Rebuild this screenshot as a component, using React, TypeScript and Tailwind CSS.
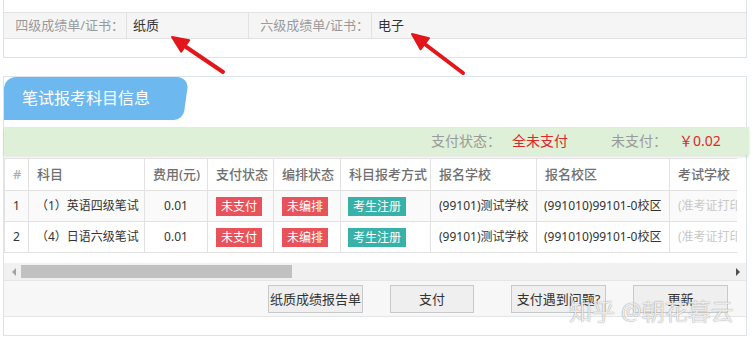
import React from "react"

const font = "font-['Noto_Sans','Noto_Sans_CJK_SC',sans-serif]"

const cols = [24, 116, 63, 66, 67, 90, 106, 133, 120]

const headers = ["#", "科目", "费用(元)", "支付状态", "编排状态", "科目报考方式", "报名学校", "报名校区", "考试学校"]

const rows = [
  { no: "1", name: "（1）英语四级笔试" },
  { no: "2", name: "（4）日语六级笔试" },
]

function Badge({ children, tone }: { children: React.ReactNode; tone: "red" | "teal" }) {
  return (
    <span
      className={
        "inline-block h-[19px] px-[5px] text-[12px] leading-[19px] text-white " +
        (tone === "red" ? "bg-[#e8525a]" : "bg-[#38b1a9]")
      }
    >
      {children}
    </span>
  )
}

function Btn({ children, w }: { children: React.ReactNode; w: string }) {
  return (
    <button
      className={`${w} h-[28px] border border-[#c9c9c9] bg-[#efefef] text-[13px] leading-[26px] text-[#333] whitespace-nowrap`}
    >
      {children}
    </button>
  )
}

export default function App() {
  return (
    <div className={`relative w-[753px] h-[344px] overflow-hidden bg-white ${font}`}>
      {/* Certificate panel */}
      <div className="ml-[3px] w-[744px] h-[58px] border-x border-b border-[#dbe4ea] pt-[12px]">
        <div className="flex h-[27px] border-y border-[#e2e2e2] bg-[#f5f5f5] text-[13px] leading-[25px]">
          <div className="w-[123px] border-r border-[#e2e2e2] pr-[2px] text-right text-[#9a9a9a]">四级成绩单/证书：</div>
          <div className="w-[122px] border-r border-[#e2e2e2] pl-[6px] text-[#333]">纸质</div>
          <div className="w-[123px] border-r border-[#e2e2e2] pr-[2px] text-right text-[#9a9a9a]">六级成绩单/证书：</div>
          <div className="flex-1 pl-[6px] text-[#333]">电子</div>
        </div>
      </div>

      {/* Exam subjects panel */}
      <div className="mt-[18px] ml-[3px] w-[744px] h-[260px] border border-[#dbe4ea]">
        {/* Tab */}
        <div className="flex h-[43px]">
          <div className="w-[170px] rounded-tl-[12px] bg-[#6db9ef] pl-[18px] text-[16px] leading-[43px] text-white">
            笔试报考科目信息
          </div>
          <div className="-ml-[12px] w-[24px] -skew-x-[8deg] rounded-tr-[12px] rounded-br-[9px] bg-[#6db9ef]" />
        </div>

        {/* Payment summary */}
        <div className="mt-[7px] -mr-[3px] flex h-[28px] items-center bg-[#dff0d8] pl-[427px] text-[14px] leading-[28px] shadow-[0_2px_3px_rgba(0,0,0,0.12)]">
          <span className="text-[#9a9a9a]">支付状态：</span>
          <span className="ml-[11px] text-[#e0262b]">全未支付</span>
          <span className="ml-[43px] text-[#9a9a9a]">未支付：</span>
          <span className="ml-[12px] text-[#e0262b]">￥0.02</span>
        </div>

        {/* Table */}
        <div className="mt-[3px] w-[733px] overflow-hidden">
          <table className="table-fixed border-collapse w-[785px]">
            <colgroup>
              {cols.map((w, i) => (
                <col key={i} style={{ width: w }} />
              ))}
            </colgroup>
            <thead>
              <tr className="h-[32px] bg-white">
                {headers.map((h, i) => (
                  <th
                    key={h}
                    className={
                      "border border-[#e2e2e2] px-[8px] text-left text-[13px] font-medium whitespace-nowrap overflow-hidden " +
                      (i === 0 ? "text-[#aaa]" : "text-[#707070]")
                    }
                  >
                    {h}
                  </th>
                ))}
              </tr>
            </thead>
            <tbody className="text-[12px] text-[#333]">
              {rows.map((r, i) => (
                <tr key={r.no} className={"h-[31px] " + (i === 0 ? "bg-[#fafafa]" : "bg-white")}>
                  <td className="border border-[#e2e2e2] px-[8px]">{r.no}</td>
                  <td className="border border-[#e2e2e2] pl-[7px] whitespace-nowrap">{r.name}</td>
                  <td className="border border-[#e2e2e2] text-center">0.01</td>
                  <td className="border border-[#e2e2e2] px-[8px]">
                    <Badge tone="red">未支付</Badge>
                  </td>
                  <td className="border border-[#e2e2e2] px-[8px]">
                    <Badge tone="red">未编排</Badge>
                  </td>
                  <td className="border border-[#e2e2e2] px-[7px]">
                    <Badge tone="teal">考生注册</Badge>
                  </td>
                  <td className="border border-[#e2e2e2] px-[8px] whitespace-nowrap">(99101)测试学校</td>
                  <td className="border border-[#e2e2e2] px-[7px] whitespace-nowrap">(991010)99101-0校区</td>
                  <td className="border border-[#e2e2e2] px-[8px] whitespace-nowrap overflow-hidden text-[#c8c8c8]">(准考证打印开放后可查看)</td>
                </tr>
              ))}
            </tbody>
          </table>
        </div>

        {/* Horizontal scrollbar */}
        <div className="mt-[10px] flex h-[17px] items-center bg-[#f1f1f1]">
          <div className="ml-[8px] h-0 w-0 border-y-[4px] border-r-[4px] border-y-transparent border-r-[#a3a3a3]" />
          <div className="ml-[5px] h-[13px] w-[271px] bg-[#c1c1c1]" />
          <div className="ml-auto mr-[6px] h-0 w-0 border-y-[4px] border-l-[4px] border-y-transparent border-l-[#505050]" />
        </div>

        {/* Action buttons */}
        <div className="flex h-[37px] items-center border-y border-[#e2e6e8] bg-[#f7f7f7] pr-[18px] justify-end">
          <Btn w="w-[95px]">纸质成绩报告单</Btn>
          <div className="w-[27px]" />
          <Btn w="w-[84px]">支付</Btn>
          <div className="w-[37px]" />
          <Btn w="w-[95px]">支付遇到问题?</Btn>
          <div className="w-[27px]" />
          <Btn w="w-[95px]">更新</Btn>
        </div>
      </div>

      {/* Annotation arrows */}
      <svg className="pointer-events-none absolute inset-0" width="753" height="344">
        <g fill="#e2161b" stroke="#e2161b" strokeLinecap="round" strokeLinejoin="round">
          <line x1="223" y1="72" x2="186" y2="47" strokeWidth="4" />
          <polygon points="172,37 189.2,40.2 181.2,51.8" strokeWidth="2" />
          <line x1="463" y1="73" x2="426" y2="45" strokeWidth="4" />
          <polygon points="412,34 429,38.1 420.5,49.3" strokeWidth="2" />
        </g>
      </svg>

      {/* Watermark */}
      <div className="pointer-events-none absolute left-[569px] top-[296px] text-[23px] leading-[30px] text-white/85 [text-shadow:0_0_1px_rgba(0,0,0,0.55)] whitespace-nowrap">
        知乎 @朝花暮云
      </div>
    </div>
  )
}
